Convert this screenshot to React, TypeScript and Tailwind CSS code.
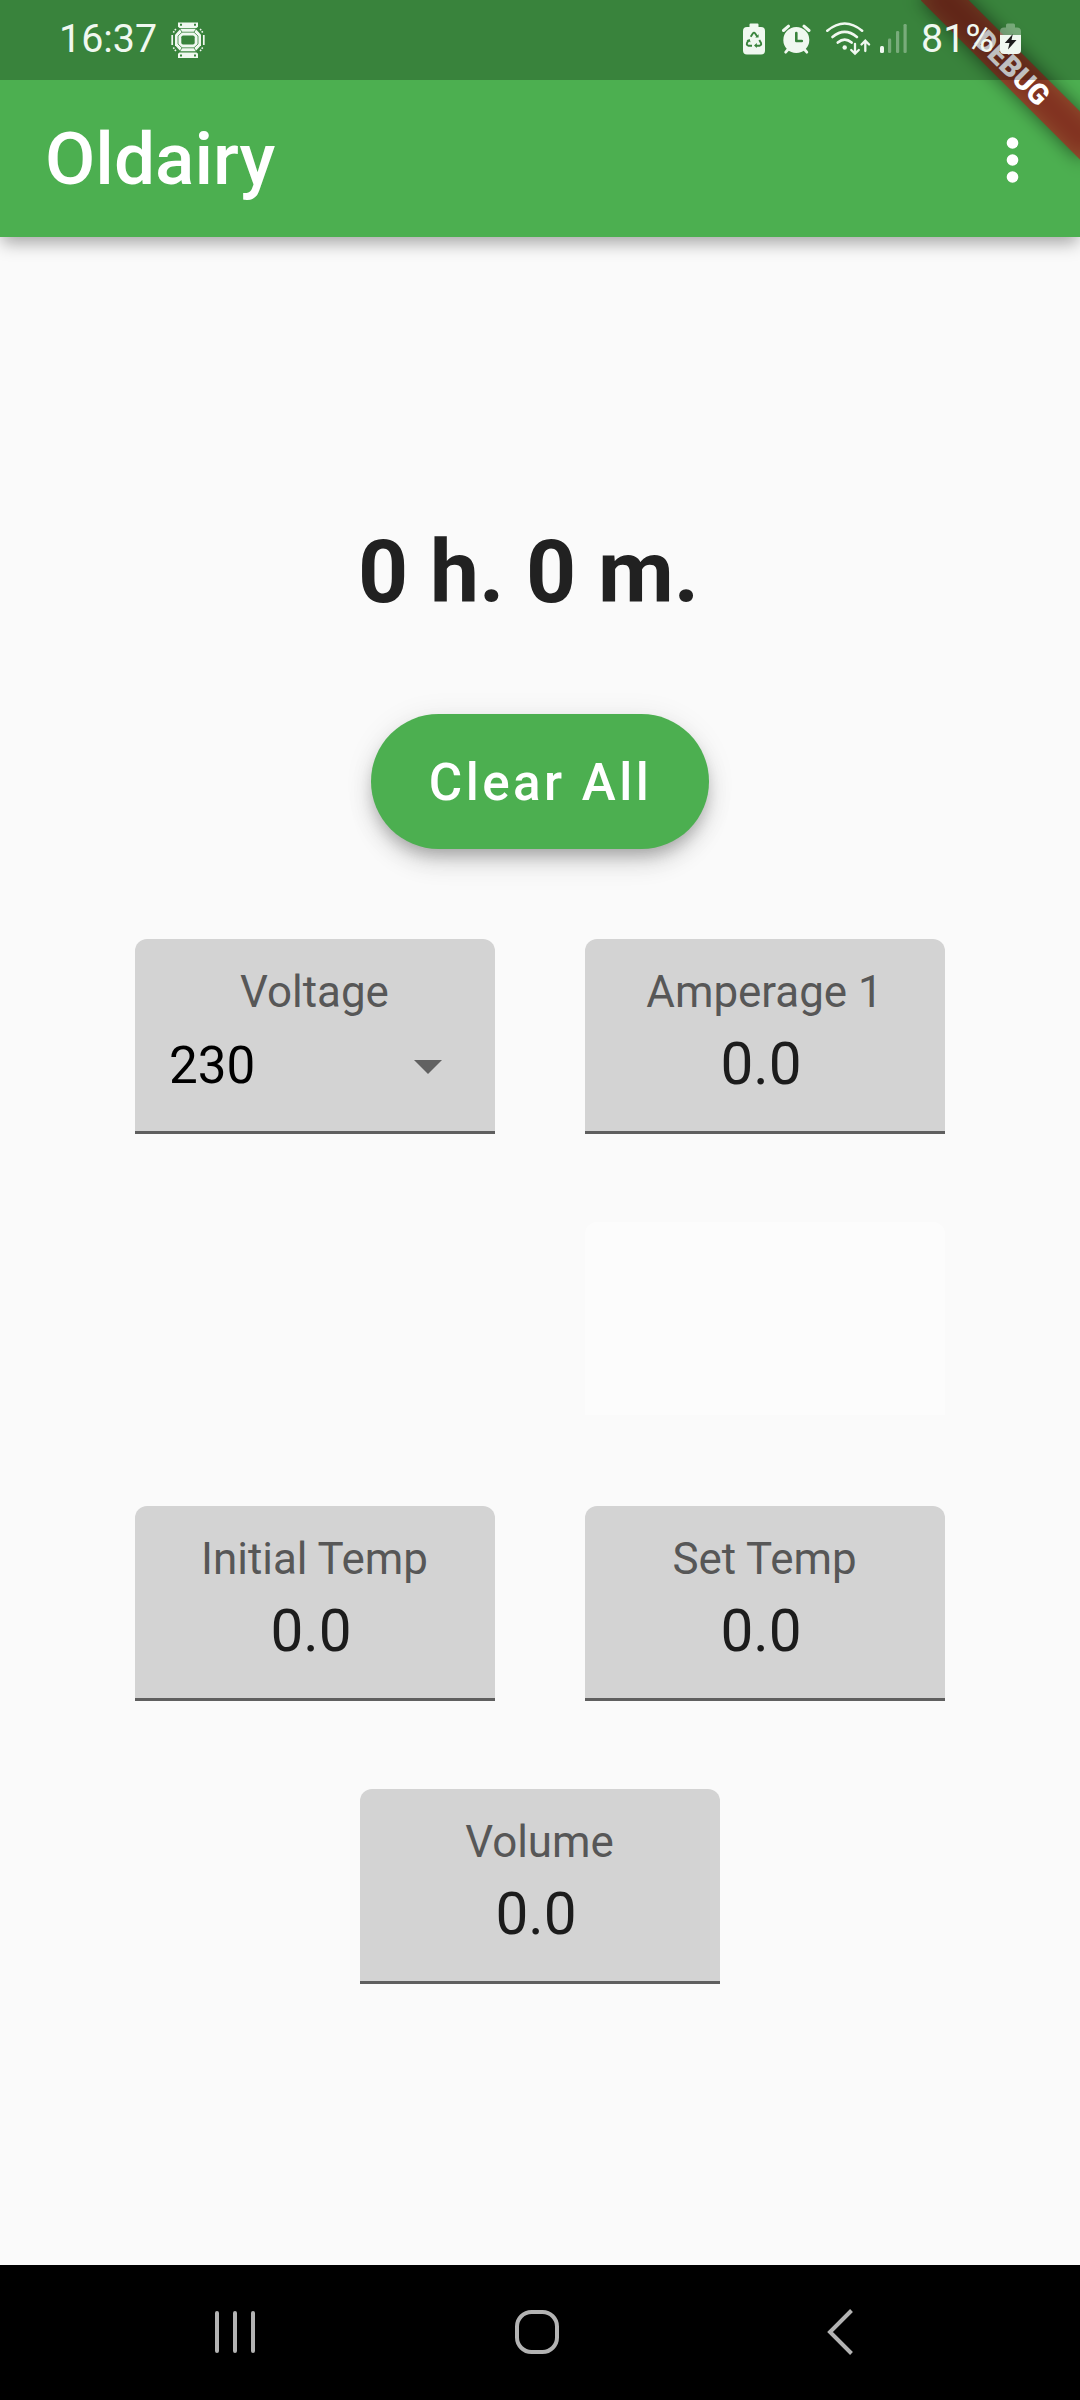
import type { ReactNode } from 'react';

const INK = '#f0f8f0';

function WatchIcon() {
  return (
    <svg width="36" height="38" viewBox="0 0 36 38" fill="none">
      <path d="M8 2.5h20v4.200l-1.500 1.300h-17L8 6.700z" fill={INK} />
      <path d="M8 38h20v-4.200l-1.500-1.300h-17L8 33.800z" fill={INK} />
      <path d="M10.500 8.700h15l5.500 6v10.600l-5.500 6h-15l-5.500-6V14.700z" fill={INK} />
      <path d="M12 12.200h12l4 3.800v8l-4 3.800H12L8 24v-8z" stroke="#39833c" strokeWidth="0.800" />
      <path d="M10 9l2 3.200M26 9l-2 3.200M10 31l2-3.200M26 31l-2-3.200" stroke="#39833c" strokeWidth="0.800" />
      <rect x="11.300" y="15.500" width="13.400" height="9" rx="1.800" fill="#39833c" />
      <path d="M2.200 15v10M33.800 15v10" stroke={INK} strokeWidth="1.700" />
      <path d="M3.300 12.500l3-4M32.700 12.500l-3-4M3.300 27.500l3 4M32.700 27.500l-3 4" stroke={INK} strokeWidth="1.600" strokeDasharray="1.600 1.100" />
      <path d="M10 4.800h2M24 4.800h2M10 35.500h2M24 35.500h2" stroke="#39833c" strokeWidth="1.900" />
    </svg>
  );
}

function BatteryRecycleIcon() {
  return (
    <svg width="24" height="38" viewBox="0 0 24 38" fill="none">
      <path d="M8.500 3.500h7a1 1 0 0 1 1 1V7h2.500a4 4 0 0 1 4 4v19.500a4 4 0 0 1-4 4H5a4 4 0 0 1-4-4V11a4 4 0 0 1 4-4h2.500V4.500a1 1 0 0 1 1-1z" fill={INK} />
      <path d="M8.700 16.800l2.100-3.300q1.200-1.700 2.400 0l2.100 3.300M17.300 20l1.700 3q.800 2.300-1.500 2.700H14M10 25.700H6.500Q4.200 25.300 5 23l1.700-3" stroke="#39833c" strokeWidth="1.900" />
      <path d="M13.300 17.500h3.300v-3.300zM14.800 23v5l-2.800-2.500zM4.500 20.500l3.200-1.500.8 3.200z" fill="#39833c" />
    </svg>
  );
}

function AlarmIcon() {
  return (
    <svg width="30" height="38" viewBox="0 0 30 38" fill="none" strokeLinecap="round">
      <circle cx="15.300" cy="20" r="13" fill={INK} />
      <path d="M2.500 10.500l5-4.300M28 10.500l-5-4.300" stroke={INK} strokeWidth="3" />
      <path d="M7 29.500l-2.300 2.700M23.500 29.500l2.300 2.700" stroke={INK} strokeWidth="2.800" />
      <path d="M15.300 13v8h5.500" stroke="#39833c" strokeWidth="2.600" strokeLinejoin="round" />
    </svg>
  );
}

function WifiIcon() {
  return (
    <svg width="46" height="38" viewBox="0 0 46 38" fill="none" stroke={INK} strokeWidth="2.600" strokeLinecap="round">
      <path d="M2.300 10.700q17.400-14.400 34.800 0M7.500 17q12.200-10.200 24.400 0M12.800 22.600q6.900-6 13.800 0" />
      <circle cx="19.700" cy="27.500" r="2.200" fill={INK} stroke="none" />
      <path d="M30 23.800v9.500M26.200 30l3.800 3.600 3.800-3.600" strokeWidth="2.300" />
      <path d="M40.300 31V21M36.500 24.500l3.800-3.800 3.800 3.800" strokeWidth="2.300" />
    </svg>
  );
}

function SignalIcon() {
  return (
    <svg width="29" height="38" viewBox="0 0 29 38" fill={INK}>
      <rect x="1" y="26" width="4" height="7" rx="1.500" />
      <g fillOpacity="0.350">
        <rect x="9" y="18.500" width="3.200" height="14.500" rx="1.300" />
        <rect x="17" y="11" width="3.200" height="22" rx="1.300" />
        <rect x="24.500" y="4" width="3.200" height="29" rx="1.300" />
      </g>
    </svg>
  );
}

function BatteryIcon() {
  return (
    <svg width="23" height="38" viewBox="0 0 23 38">
      <path d="M1 15v-3.500a4 4 0 0 1 4-4h2V5a1.500 1.500 0 0 1 1.500-1.500h6A1.500 1.500 0 0 1 16 5v2.500h2a4 4 0 0 1 4 4V15z" fill={INK} fillOpacity="0.350" />
      <path d="M1 15h21v15a4 4 0 0 1-4 4H5a4 4 0 0 1-4-4z" fill={INK} />
      <path d="M13.800 14L5.800 23h4.700l-1.500 6.500 8.500-9.500h-5z" fill="#1d1d1d" />
    </svg>
  );
}

function StatusBar() {
  return (
    <div className="relative z-20 flex h-20 items-center bg-black/25 pb-[3px] text-[39.4px] leading-none text-[#f0f8f0]">
      <span className="ml-[59px] w-[111px]">16:37</span>
      <WatchIcon />
      <div className="ml-auto flex items-center">
        <BatteryRecycleIcon />
        <div className="ml-[15px]"><AlarmIcon /></div>
        <div className="ml-[14px]"><WifiIcon /></div>
        <div className="ml-2"><SignalIcon /></div>
        <span className="ml-[13px] w-[78px]">81%</span>
        <BatteryIcon />
      </div>
      <div className="w-[58px]" />
    </div>
  );
}

function DebugBanner() {
  return (
    <div className="pointer-events-none absolute inset-0 z-10 overflow-hidden">
      <div className="absolute -right-[45px] top-[50.700px] h-[33.800px] w-[225px] rotate-45">
        <div className="absolute inset-0 bg-black/50 blur-[9px]" />
        <div className="absolute inset-0 flex items-center justify-center bg-[#b71c1c]/63 text-[28.700px] font-black leading-none text-white">
          DEBUG
        </div>
      </div>
    </div>
  );
}

function Field({ label, children }: { label: string; children: ReactNode }) {
  return (
    <div className="h-[195px] w-[360px] rounded-t-xl border-b-[3px] border-[#5f5f5f] bg-[#d3d3d3] pt-7">
      <div className="pr-px text-center text-[43.900px] leading-[50px] text-[#575757]">{label}</div>
      {children}
    </div>
  );
}

function NumberValue({ value }: { value: string }) {
  return (
    <div className="mt-[17px] pr-2 text-center text-[58.500px] leading-[60px] text-[#1c1c1c]">{value}</div>
  );
}

export default function App() {
  return (
    <div className="flex h-[2400px] w-[1080px] flex-col overflow-hidden bg-[#fafafa] font-['Roboto',sans-serif]">
      <header className="relative flex h-[237px] shrink-0 flex-col bg-[#4caf50] shadow-[0_8px_16px_-2px_rgba(0,0,0,0.340)]">
        <StatusBar />
        <div className="flex flex-1 items-center justify-between pl-[45px] pr-[61px] pt-[2px]">
          <h1 className="text-[73px] font-medium leading-none text-white">Oldairy</h1>
          <svg width="13" height="48" viewBox="0 0 13 48" fill="#fff">
            <circle cx="6.500" cy="7" r="5.800" />
            <circle cx="6.500" cy="24" r="5.800" />
            <circle cx="6.500" cy="41" r="5.800" />
          </svg>
        </div>
        <DebugBanner />
      </header>

      <main className="flex flex-1 flex-col items-center">
        <div className="mt-[285px] whitespace-pre pr-px text-[87.500px] font-bold leading-[100px] text-[#212121]">
          {'0 h. 0 m. '}
        </div>
        <button className="mt-[92px] flex h-[135px] w-[338px] items-center justify-center rounded-full bg-[#4caf50] pl-px pt-[3px] text-[51.200px] font-medium leading-none tracking-[3.450px] text-white shadow-[0_9px_14px_-3px_rgba(0,0,0,0.200),0_15px_24px_0_rgba(0,0,0,0.120),0_3px_30px_0_rgba(0,0,0,0.080)]">
          Clear All
        </button>

        <div className="mt-[90px] flex flex-col items-center gap-[88.400px]">
          <div className="flex gap-[90px]">
            <Field label="Voltage">
              <div className="mt-[19px] flex items-center justify-between pl-[34px] pr-[53px]">
                <span className="text-[51.200px] leading-[60px] text-black">230</span>
                <svg width="28" height="14" viewBox="0 0 28 14" className="mt-[2px]">
                  <path d="M0 0h28L14 14z" fill="#616161" />
                </svg>
              </div>
            </Field>
            <Field label="Amperage 1">
              <NumberValue value="0.0" />
            </Field>
          </div>
          <div className="flex h-[195px] w-full justify-end">
            <div className="h-[193px] w-[360px] rounded-t-xl bg-[#fcfcfc]" />
          </div>
          <div className="flex gap-[90px]">
            <Field label="Initial Temp">
              <NumberValue value="0.0" />
            </Field>
            <Field label="Set Temp">
              <NumberValue value="0.0" />
            </Field>
          </div>
          <Field label="Volume">
            <NumberValue value="0.0" />
          </Field>
        </div>
      </main>

      <nav className="flex h-[135px] shrink-0 items-center bg-black pb-px">
        <svg width="44" height="48" viewBox="0 0 44 48" className="ml-[213px]" stroke="#b3b3b3" strokeWidth="4" strokeLinecap="round">
          <path d="M4 5v38M22 5v38M40 5v38" />
        </svg>
        <svg width="48" height="48" viewBox="0 0 48 48" className="ml-[256px]" fill="none" stroke="#b3b3b3" strokeWidth="4">
          <rect x="4" y="4" width="40" height="40" rx="14.500" />
        </svg>
        <svg width="30" height="48" viewBox="0 0 30 48" className="ml-[264px]" fill="none" stroke="#b3b3b3" strokeWidth="4">
          <path d="M26.500 2.500L5 24l21.500 21.500" />
        </svg>
      </nav>
    </div>
  );
}
